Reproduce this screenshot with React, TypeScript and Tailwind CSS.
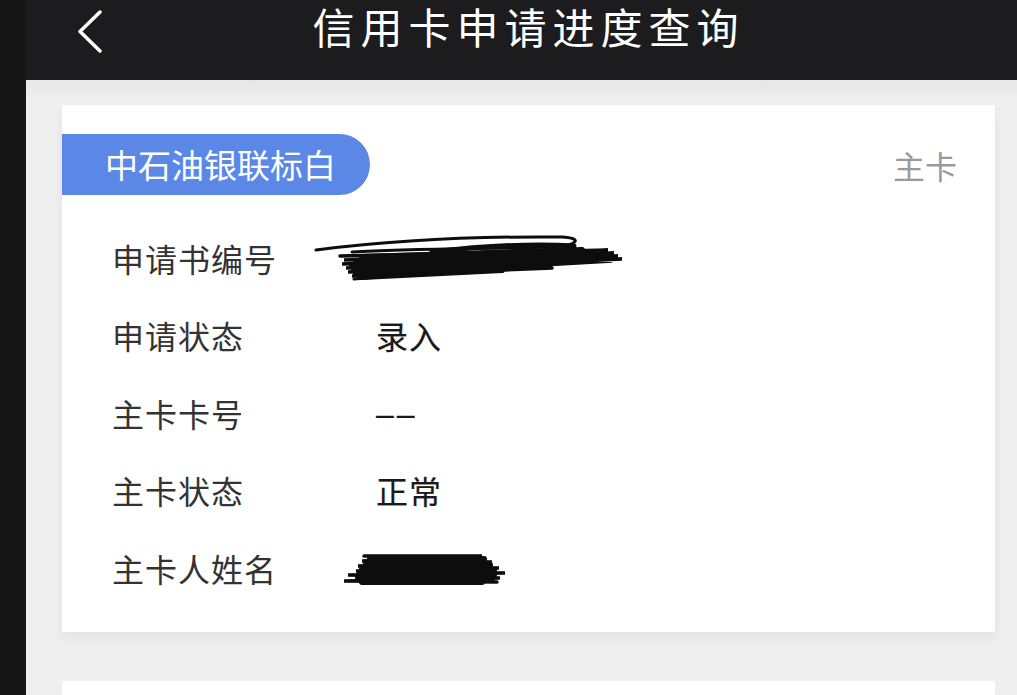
import React from "react";

const font = { fontFamily: '"Noto Sans CJK SC", "Noto Sans", sans-serif' };

const ScribbleLong = () => (
  <svg width="312" height="52" viewBox="0 0 312 52" className="block">
    <g fill="none" stroke="#0d0d0d" strokeLinecap="round">
      <path d="M4 20 C 60 13, 150 6, 250 7 C 270 8, 268 15, 240 17 C 180 19, 100 18, 40 22" strokeWidth="3" />
      <path d="M28 26 L 296 20 L 32 30 L 302 23 L 30 34 L 306 26 L 34 38 L 310 29 L 36 42 L 300 31 L 40 46 L 240 38" strokeWidth="3.5" />
      <path d="M50 27 L 270 20 M 44 31 L 280 24 M 40 35 L 285 27 M 42 39 L 260 31 M 44 43 L 220 35 M 50 47 L 190 40" strokeWidth="6" />
      <path d="M42 49 C 100 44, 160 40, 225 37" strokeWidth="3" />
      <path d="M120 22 C 180 15, 230 14, 262 16" strokeWidth="5" />
    </g>
  </svg>
);

const ScribbleShort = () => (
  <svg width="170" height="36" viewBox="0 0 170 36" className="block">
    <g fill="none" stroke="#0d0d0d" strokeLinecap="round">
      <path d="M22 5 L 140 5 L 20 10 L 150 11 L 16 15 L 157 17 L 14 20 L 163 22 L 6 24 L 158 27 L 2 30 L 155 31" strokeWidth="3.5" />
      <path d="M28 8 L 142 8 M 24 13 L 148 14 M 20 18 L 152 19 M 18 23 L 152 24 M 16 27 L 150 28 M 20 31 L 140 31" strokeWidth="6" />
    </g>
  </svg>
);

const rows: { label: string; value: React.ReactNode }[] = [
  { label: "申请书编号", value: <div className="-ml-[64px] -mt-[4px]"><ScribbleLong /></div> },
  { label: "申请状态", value: "录入" },
  {
    label: "主卡卡号",
    value: <span className="font-['Liberation_Sans',sans-serif] tracking-[3px]">––</span>,
  },
  { label: "主卡状态", value: "正常" },
  { label: "主卡人姓名", value: <div className="-ml-[34px] mt-[2px]"><ScribbleShort /></div> },
];

const App = () => {
  return (
    <div className="flex h-[695px] w-[1017px] overflow-hidden bg-[#161616]" style={font}>
      <div className="w-[26px] shrink-0" />
      <div className="flex flex-1 flex-col bg-[#efefef]">
        <header className="relative flex h-[80px] shrink-0 items-start justify-center bg-[#1c1c1f]">
          <svg width="30" height="44" viewBox="0 0 30 44" className="absolute left-[50px] top-[10px]">
            <path d="M24 2 L 4 21.5 L 24 41" fill="none" stroke="#fff" strokeWidth="3.5" strokeLinecap="round" strokeLinejoin="round" />
          </svg>
          <h1 className="mt-[2px] pl-[14px] text-[42px] leading-[48px] tracking-[6px] text-white">信用卡申请进度查询</h1>
        </header>
        <div className="flex flex-1 flex-col gap-[49px] bg-gradient-to-b from-[#e6e6e6] to-[#efefef] to-[20px] pl-[36px] pr-[22px] pt-[25px]">
          <section className="bg-white pb-[25px] pt-[29px] shadow-[0_6px_12px_rgba(0,0,0,0.06)]">
            <div className="flex items-center justify-between pr-[38px]">
              <div className="flex h-[61px] w-[308px] items-center rounded-r-full bg-[#5b88e6] pl-[43px] text-[33px] text-white">
                中石油银联标白
              </div>
              <span className="text-[32px] text-[#9a9a9a]">主卡</span>
            </div>
            <div className="mt-[24px] flex flex-col">
              {rows.map((r) => (
                <div key={r.label} className="flex h-[77.5px] items-center pl-[50px]">
                  <span className="w-[264px] text-[32px] tracking-[1px] text-[#333]">{r.label}</span>
                  <span className="text-[32px] tracking-[1px] text-[#1a1a1a] [-webkit-text-stroke:0.2px_#1a1a1a]">{r.value}</span>
                </div>
              ))}
            </div>
          </section>
          <section className="h-[200px] bg-white" />
        </div>
      </div>
    </div>
  );
};

export default App;
